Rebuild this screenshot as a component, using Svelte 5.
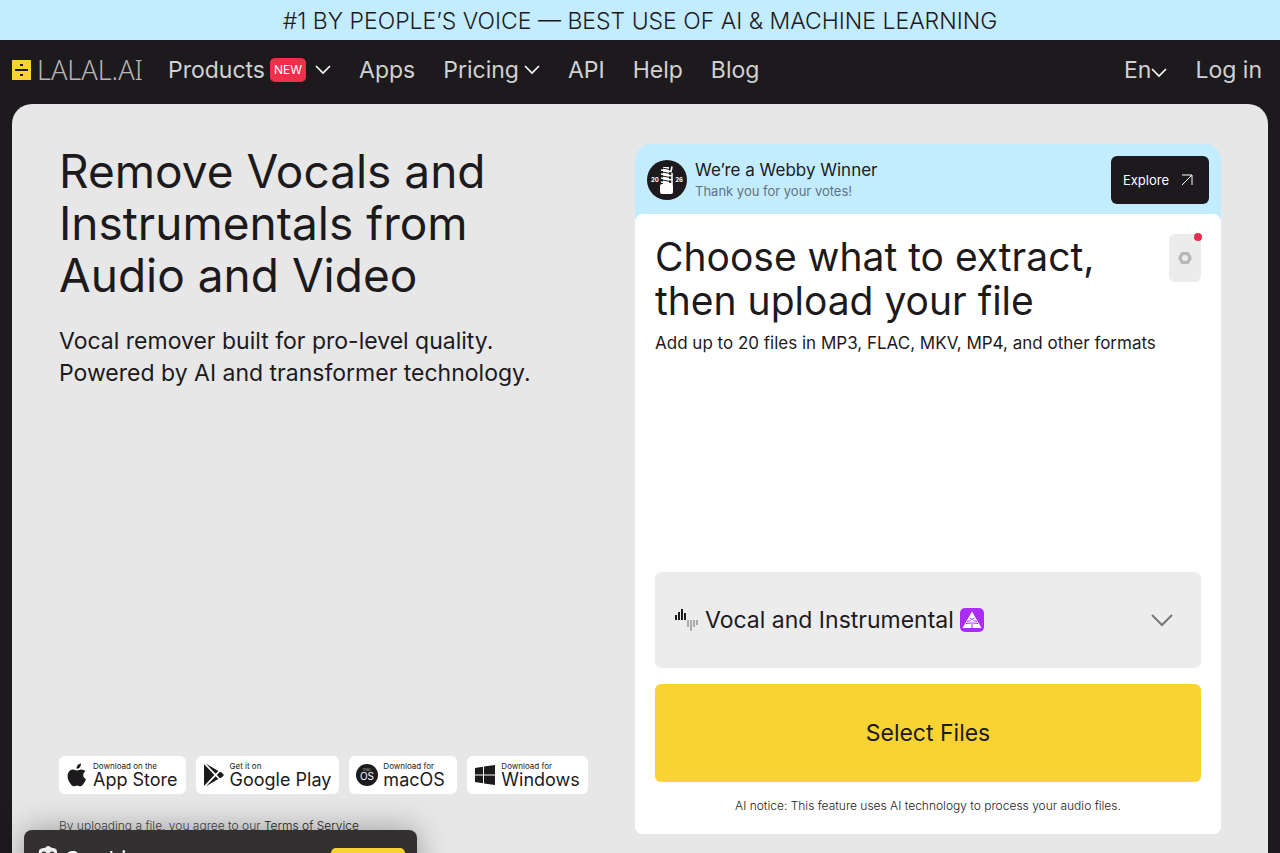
<script lang="ts">
    let lang = $state('en');
    let stem = $state('vocal');

    const stores = [
        { id: 'apple', small: 'Download on the', name: 'App Store' },
        { id: 'google', small: 'Get it on', name: 'Google Play' },
        { id: 'macos', small: 'Download for', name: 'macOS' },
        { id: 'windows', small: 'Download for', name: 'Windows' }
    ];
</script>

{#snippet chevron()}
    <svg class="chevron" viewBox="0 0 16 10" width="16" height="10" aria-hidden="true">
        <path d="M1 1l7 7 7-7" fill="none" stroke="#fff" stroke-width="1.6" />
    </svg>
{/snippet}

<div class="page">
    <a class="banner" href="#webby">#1 BY PEOPLE’S VOICE — BEST USE OF AI &amp; MACHINE LEARNING</a>

    <header>
        <a class="logo" href="#home">
            <svg viewBox="0 0 19 20" width="19" height="20" aria-hidden="true">
                <rect width="19" height="20" fill="#f8d332" />
                <path d="M3 9h13v2H3zM8 4h3v2H8zM8 14h3v2H8z" fill="#1c1a1d" />
            </svg>
            <span>LALAL.AI</span>
        </a>
        <nav>
            <button class="products" type="button">Products<span class="new">NEW</span>{@render chevron()}</button>
            <a href="#apps">Apps</a>
            <button type="button">Pricing{@render chevron()}</button>
            <a href="#api">API</a>
            <a href="#help">Help</a>
            <a href="#blog">Blog</a>
        </nav>
        <div class="account">
            <label class="lang">
                <select bind:value={lang} aria-label="Language">
                    <option value="en">En</option>
                </select>
                {@render chevron()}
            </label>
            <a href="#login">Log in</a>
        </div>
    </header>

    <main>
        <section class="intro">
            <h1>Remove Vocals and<br />Instrumentals from<br />Audio and Video</h1>
            <p class="lead">Vocal remover built for pro-level quality.<br />Powered by AI and transformer technology.</p>

            <div class="stores">
                {#each stores as store}
                    <a class="store" href="#{store.id}">
                        {#if store.id === 'apple'}
                            <svg viewBox="0 0 20 24" width="20" height="24" aria-hidden="true">
                                <path fill="#1c1a1d" d="M14 .4c.2 1.500-.4 2.800-1.200 3.800-.9 1-2 1.600-3.200 1.500-.2-1.400.4-2.700 1.200-3.600C11.700 1.100 12.900.5 14 .4zM18.500 8.300c-1.500.9-2.300 2.200-2.300 3.800 0 1.900 1.100 3.400 2.800 4-.5 1.500-1.200 2.900-2.100 4.200-1 1.500-2 2.900-3.500 2.900-1.300 0-1.800-.8-3.300-.8-1.600 0-2.100.8-3.400.8-1.500 0-2.600-1.400-3.600-2.900C.9 17.300-.1 13.400 1 10.400c.9-2.400 2.800-3.900 4.900-3.900 1.600 0 2.900 1 3.900 1 .9 0 2.500-1.100 4.500-1.100 1.700 0 3.200.7 4.200 1.900z" />
                            </svg>
                        {:else if store.id === 'google'}
                            <svg viewBox="0 0 20 24" width="20" height="24" aria-hidden="true">
                                <path fill="#1c1a1d" d="M0 1v22l10.400-11zM2 .7l9.600 10.100 2.800-2.900zM2 23.300l9.600-10.100 2.800 2.900zM15.600 8.900L12.800 12l2.800 3.100 1.900-.4L20 12l-2.500-2.700z" />
                            </svg>
                        {:else if store.id === 'macos'}
                            <svg class="macos" viewBox="0 0 22 22" width="22" height="22" aria-hidden="true">
                                <circle cx="11" cy="11" r="11" fill="#1c1a1d" />
                                <text x="11" y="7" text-anchor="middle" font-size="4" fill="#aaa">mac</text>
                                <text x="11" y="16" text-anchor="middle" font-size="10" fill="#fff">OS</text>
                            </svg>
                        {:else}
                            <svg viewBox="0 0 20 20" width="20" height="20" aria-hidden="true">
                                <path fill="#1c1a1d" d="M0 3l8-1.200v7.700H0zM9 1.600L20 0v9.500H9zM0 10.500h8v7.700L0 17zM9 10.500h11V20L9 18.400z" />
                            </svg>
                        {/if}
                        <span class="store-text"><small>{store.small}</small>{store.name}</span>
                    </a>
                {/each}
            </div>
            <p class="terms">By uploading a file, you agree to our <a href="#terms">Terms of Service</a></p>
        </section>

        <section class="card">
            <div class="webby">
                <svg viewBox="0 0 40 40" width="40" height="40" aria-hidden="true">
                    <circle cx="20" cy="20" r="20" fill="#1c1a1d" />
                    <path d="M16 7h6v18h-6z" fill="#fff" />
                    <path d="M14 10l10 1.500 1-5M14 14l11 2v-3M14 18l11 2v-3M14 22l11 2v-3" fill="none" stroke="#fff" stroke-width="1.600" />
                    <path d="M15 8l8 1.500M15 12l9 1.600M15 16l9 1.600M15 20l9 1.600" stroke="#1c1a1d" stroke-width="1" />
                    <rect x="13" y="24" width="13" height="10" rx="2" fill="#fff" />
                    <text x="8" y="22" text-anchor="middle" font-size="6" font-weight="700" fill="#fff">20</text>
                    <text x="32" y="22" text-anchor="middle" font-size="6" font-weight="700" fill="#fff">26</text>
                </svg>
                <div class="webby-text">
                    <strong>We’re a Webby Winner</strong>
                    <span>Thank you for your votes!</span>
                </div>
                <a class="explore" href="#explore">
                    Explore
                    <svg viewBox="0 0 12 12" width="12" height="12" aria-hidden="true">
                        <path d="M1 11L11 1M1 1h10v10" fill="none" stroke="#fff" stroke-width="1" />
                    </svg>
                </a>
            </div>

            <div class="upload">
                <div class="upload-head">
                    <h2>Choose what to extract,<br />then upload your file</h2>
                    <button class="settings" type="button" aria-label="Settings">
                        <svg viewBox="0 0 14 14" width="14" height="14" aria-hidden="true">
                            <path fill="#b8b8b8" fill-rule="evenodd" d="M4 1h6l1 .6L13.500 6v2L11 12.400l-1 .6H4l-1-.6L.5 8V6L3 1.600zM7 4a3 3 0 100 6 3 3 0 000-6z" />
                        </svg>
                        <span class="dot"></span>
                    </button>
                </div>
                <p class="formats">Add up to 20 files in MP3, FLAC, MKV, MP4, and other formats</p>

                <label class="stem">
                    <svg viewBox="0 0 24 24" width="24" height="24" aria-hidden="true">
                        <path d="M1 7v5M4 4v8M7 1v11M10 5v7" stroke="#1c1a1d" stroke-width="2" />
                        <path d="M13 12v7M16 12v11M19 12v7M22 12v5" stroke="#aaa" stroke-width="2" />
                    </svg>
                    <select bind:value={stem} aria-label="What to extract">
                        <option value="vocal">Vocal and Instrumental</option>
                    </select>
                    <svg class="andromeda" viewBox="0 0 24 24" width="24" height="24" aria-hidden="true">
                        <rect width="24" height="24" rx="5" fill="#ab2cf2" />
                        <path d="M12 3.500L21.500 20h-19z" fill="#fff" />
                        <path d="M12 14v6M9.500 10l2.500 1.500 2.500-1.500M7 13.500l3.500-1M17 13.500l-3.500-1M6 15.500l5-.5M18 15.500l-5-.5" fill="none" stroke="#ab2cf2" stroke-width="1" />
                    </svg>
                    <svg class="arrow" viewBox="0 0 24 14" width="24" height="14" aria-hidden="true">
                        <path d="M2 2l10 10L22 2" fill="none" stroke="#777" stroke-width="2" />
                    </svg>
                </label>
                <button class="select-files" type="button">Select Files</button>
                <p class="notice">AI notice: This feature uses AI technology to process your audio files.</p>
            </div>
        </section>
    </main>

    <aside class="cookies">
        <svg viewBox="0 0 20 20" width="20" height="20" aria-hidden="true">
            <path fill="#eee" d="M10 0c2 0 3 2 5 2s4 1 4 4 1 3 1 5-2 3-3 5-3 3-5 3-4 1-6 0-3-2-4-4-2-3-2-5 1-3 1-5 3-3 5-3 2-2 4-2z" />
            <circle cx="6" cy="8" r="2.500" fill="#333032" />
            <circle cx="14" cy="8" r="2.500" fill="#333032" />
            <circle cx="6" cy="8" r="1" fill="#eee" />
            <circle cx="14" cy="8" r="1" fill="#eee" />
        </svg>
        <span>Cookies</span>
        <button type="button">Accept</button>
    </aside>
</div>

<style>
    :global(body) {
        background: #1c1a1d;
    }

    .page {
        height: 100vh;
        overflow: hidden;
        background: #1c1a1d;
        color: #1c1a1d;
        font-family: Inter, 'Liberation Sans', sans-serif;
        font-weight: 400;
    }

    h1, h2, p {
        margin: 0;
        font-weight: 400;
    }

    a {
        color: inherit;
        text-decoration: none;
    }

    button, select {
        padding: 0;
        border: 0;
        background: none;
        color: inherit;
        font: inherit;
        cursor: pointer;
    }

    select {
        appearance: none;
        field-sizing: content;
    }

    svg {
        flex: none;
    }

    .banner {
        display: block;
        padding-top: 2px;
        background: #c4ecff;
        font-size: 23px;
        font-weight: 300;
        line-height: 38px;
        text-align: center;
    }

    header {
        display: flex;
        align-items: center;
        height: 64px;
        padding: 0 18px 4px 12px;
        box-sizing: border-box;
        color: #d2d1d2;
        font-size: 23px;
        line-height: 32px;
    }

    .logo, nav, .account, nav button, .lang {
        display: flex;
        align-items: center;
    }

    .logo {
        gap: 6px;
        margin-right: 25px;
        color: #b5b4b5;
        font-family: 'Noto Sans', sans-serif;
        font-size: 27px;
        font-weight: 300;
    }

    nav, .account {
        gap: 28px;
    }

    nav button {
        gap: 5px;
    }

    .products .chevron {
        margin-left: 4px;
    }

    .new {
        padding: 0 4px;
        border-radius: 5px;
        background: #f0304a;
        color: #fff;
        font-size: 12px;
        line-height: 24px;
    }

    .account {
        margin-left: auto;
    }

    .lang .chevron {
        margin-top: 6px;
    }

    main {
        display: grid;
        grid-template-columns: 530fr 586fr;
        gap: 46px;
        padding: 40px 47px;
        margin: 0 12px;
        border-radius: 20px;
        background: #e7e7e7;
    }

    .intro {
        display: flex;
        flex-direction: column;
    }

    h1 {
        margin-top: 1px;
        font-size: 46px;
        line-height: 52px;
    }

    .lead {
        margin-top: 24px;
        font-size: 23px;
        line-height: 32px;
    }

    .stores {
        display: flex;
        gap: 10px;
        margin-top: auto;
    }

    .store {
        display: flex;
        align-items: center;
        gap: 6px;
        min-width: 92px;
        height: 38px;
        padding: 0 8px;
        border-radius: 6px;
        background: #fff;
        white-space: nowrap;
    }

    .macos {
        margin: 0 -1px;
    }

    .store-text {
        font-size: 18px;
        line-height: 18px;
    }

    .store-text small {
        display: block;
        font-size: 8px;
        line-height: 10px;
    }

    .terms {
        margin-top: 24px;
        color: #444;
        font-size: 12px;
        font-weight: 300;
        line-height: 16px;
    }

    .terms a {
        color: #1c1a1d;
    }

    .card {
        display: flex;
        flex-direction: column;
        min-height: 690px;
        border-radius: 16px 16px 8px 8px;
        background: linear-gradient(#c4ecff 90px, #fff 90px);
    }

    .webby {
        display: flex;
        align-items: center;
        gap: 8px;
        padding: 12px 12px 10px;
    }

    .webby-text {
        display: flex;
        flex-direction: column;
        padding-top: 2px;
        margin-right: auto;
        line-height: 21px;
    }

    .webby-text strong {
        font-size: 17px;
        font-weight: 400;
    }

    .webby-text span {
        color: #607480;
        font-size: 13px;
    }

    .explore {
        display: flex;
        align-items: center;
        gap: 12px;
        padding: 0 16px 0 12px;
        border-radius: 6px;
        background: #1c1a1d;
        color: #fff;
        font-size: 13px;
        line-height: 48px;
    }

    .upload {
        display: flex;
        flex: 1;
        flex-direction: column;
        padding: 20px;
        border-radius: 8px;
        background: #fff;
    }

    .upload-head {
        display: flex;
        justify-content: space-between;
    }

    h2 {
        margin-top: 1px;
        font-size: 39px;
        line-height: 44px;
        white-space: nowrap;
    }

    .settings {
        position: relative;
        display: flex;
        align-items: center;
        justify-content: center;
        width: 32px;
        height: 48px;
        border-radius: 6px;
        background: #ececec;
    }

    .dot {
        position: absolute;
        top: -1px;
        right: -1px;
        width: 8px;
        height: 8px;
        border-radius: 50%;
        background: #e62e4c;
    }

    .formats {
        margin-top: 7px;
        font-size: 17px;
        line-height: 26px;
    }

    .stem {
        display: flex;
        align-items: center;
        gap: 6px;
        height: 96px;
        padding: 0 27px 0 20px;
        margin-top: auto;
        border-radius: 6px;
        box-sizing: border-box;
        background: #ececec;
        font-size: 23px;
    }

    .arrow {
        margin-left: auto;
    }

    .select-files {
        margin-top: 16px;
        border-radius: 6px;
        background: #f8d332;
        font-size: 23px;
        line-height: 98px;
    }

    .notice {
        margin-top: 16px;
        font-size: 12px;
        font-weight: 300;
        line-height: 16px;
        text-align: center;
    }

    .cookies {
        position: fixed;
        bottom: -137px;
        left: 24px;
        display: flex;
        align-items: flex-start;
        gap: 6px;
        width: 393px;
        height: 160px;
        padding: 16px 12px 0 14px;
        border-radius: 8px;
        box-sizing: border-box;
        background: #333032;
        box-shadow: 0 0 32px rgba(0, 0, 0, 0.35);
        color: #fff;
        font-size: 23px;
        line-height: 28px;
    }

    .cookies button {
        width: 74px;
        height: 32px;
        margin: 2px 0 0 auto;
        border-radius: 5px;
        background: #f8d332;
        color: #1c1a1d;
        font-size: 14px;
    }
</style>
